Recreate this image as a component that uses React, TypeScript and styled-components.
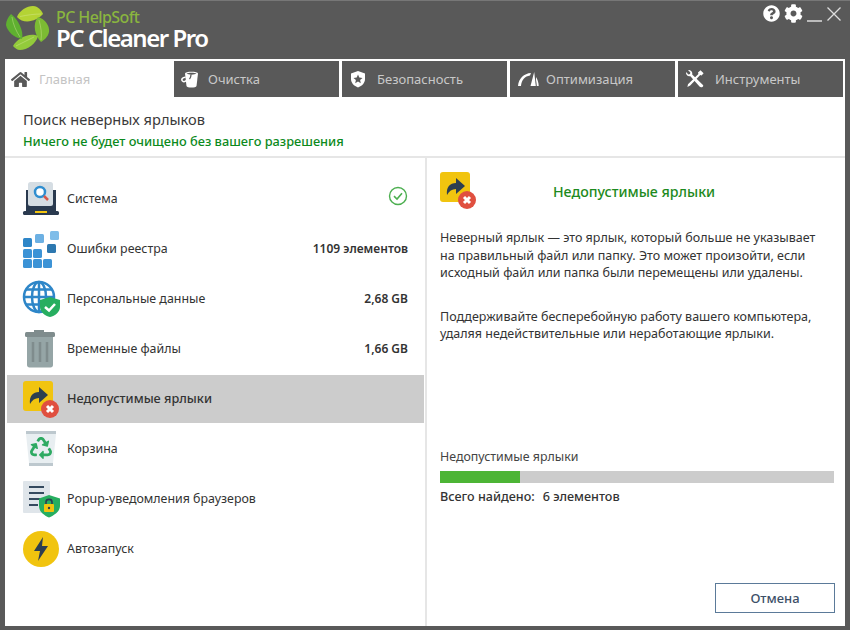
import styled, { createGlobalStyle } from 'styled-components';
import { FaCog, FaHome, FaQuestionCircle, FaRecycle } from 'react-icons/fa';

const GlobalStyle = createGlobalStyle`
  html, body {
    margin: 0;
    padding: 0;
    background: #595959;
  }
  * {
    box-sizing: border-box;
  }
`;

const Window = styled.div`
  width: 850px;
  height: 630px;
  background: #595959;
  border-top: 1px solid #777;
  padding: 0 5px 4px 5px;
  display: flex;
  flex-direction: column;
  font-family: 'Noto Sans', 'Open Sans', sans-serif;
  color: #333;
`;

const TitleBar = styled.div`
  height: 58px;
  flex: none;
  display: flex;
  justify-content: space-between;
  align-items: flex-start;
`;

const Brand = styled.div`
  display: flex;
  align-items: flex-start;
  gap: 1px;
  padding-top: 2px;
`;

const BrandText = styled.div`
  display: flex;
  flex-direction: column;
  padding-top: 6px;
`;

const Vendor = styled.div`
  font-size: 16px;
  line-height: 16px;
  font-weight: 500;
  letter-spacing: -0.6px;
  color: #8ab53f;
`;

const Product = styled.div`
  font-size: 24px;
  line-height: 26px;
  font-weight: 600;
  letter-spacing: -1.45px;
  color: #fff;
`;

const WindowButtons = styled.div`
  display: flex;
  align-items: center;
  gap: 4px;
  color: #fff;
  padding: 3px 0 0 0;
  margin-right: 3px;
`;

const Content = styled.div`
  flex: 1;
  background: #fff;
  display: flex;
  flex-direction: column;
  min-height: 0;
`;

const Tabs = styled.div`
  display: flex;
  flex: none;
  padding-top: 2px;
  gap: 3px;
  height: 38px;
`;

const FirstTab = styled.div`
  width: 169px;
  margin-right: -3px;
  background: #fff;
  color: #c4c4c4;
  display: flex;
  align-items: center;
  gap: 9px;
  padding-left: 6px;
  font-size: 13px;
`;

const Tab = styled.div<{ $gap: number }>`
  width: 165px;
  background: #595959;
  color: #c8c8c8;
  display: flex;
  align-items: center;
  gap: ${(p) => p.$gap}px;
  padding-left: 7px;
  font-size: 13px;
`;

const TabIcon = styled.span`
  height: 20px;
  display: flex;
  align-items: center;
  color: #fff;
`;

const HomeTabIcon = styled(TabIcon)`
  color: #595959;
`;

const Header = styled.div`
  flex: none;
  height: 61px;
  padding: 12px 0 0 18px;
  border-bottom: 2px solid #e6e6e6;
`;

const Heading = styled.div`
  font-size: 14.6px;
  line-height: 20px;
  color: #3a3a3a;
`;

const Notice = styled.div`
  font-size: 12.8px;
  line-height: 18px;
  margin-top: 3px;
  font-weight: 500;
  color: #0c8a1c;
`;

const Body = styled.div`
  flex: 1;
  display: flex;
  min-height: 0;
`;

const Sidebar = styled.div`
  width: 422px;
  flex: none;
  border-right: 2px solid #e6e6e6;
  padding: 17px 0 0 2px;
  display: flex;
  flex-direction: column;
  gap: 2px;
`;

const Row = styled.div<{ $selected?: boolean }>`
  height: 48px;
  width: 417px;
  flex: none;
  display: flex;
  align-items: center;
  padding: 0 16px 0 15px;
  background: ${(p) => (p.$selected ? '#cccccc' : 'transparent')};
  font-size: 12.5px;
`;

const RowIcon = styled.div`
  width: 38px;
  height: 38px;
  margin-right: 7px;
  flex: none;
`;

const RowLabel = styled.div<{ $selected?: boolean }>`
  flex: 1;
  padding-bottom: 2px;
  color: #333;
  font-size: ${(p) => (p.$selected ? '12.7px' : '12.4px')};
  font-weight: ${(p) => (p.$selected ? 500 : 400)};
`;

const RowValue = styled.div`
  padding-bottom: 2px;
  font-weight: 600;
  font-size: 12px;
  color: #333;
`;

const Details = styled.div`
  flex: 1;
  display: flex;
  flex-direction: column;
  padding: 14px 11px 13px 13px;
`;

const DetailsHead = styled.div`
  display: flex;
  height: 39px;
  margin: -1px 0 0 -1px;
  flex: none;
`;

const DetailsTitle = styled.div`
  flex: 1;
  text-align: center;
  padding-right: 43px;
  font-size: 14.2px;
  font-weight: 500;
  line-height: 41px;
  color: #1d8a20;
`;

const Paragraph = styled.p`
  margin: 0;
  font-size: 12.5px;
  line-height: 17.5px;
  color: #333;
  white-space: pre-line;
`;

const FirstParagraph = styled(Paragraph)`
  margin-top: 19px;
`;

const SecondParagraph = styled(Paragraph)`
  margin-top: 26px;
`;

const Spacer = styled.div`
  flex: 1;
`;

const ProgressLabel = styled.div`
  font-size: 12.4px;
  line-height: 18px;
  color: #444;
`;

const Progress = styled.div`
  height: 12px;
  margin-top: 5px;
  background: #cccccc;
`;

const ProgressFill = styled.div`
  height: 100%;
  background: #4db535;
`;

const Found = styled.div`
  display: flex;
  gap: 8px;
  margin-top: 5px;
  font-size: 12.6px;
  line-height: 18px;
  font-weight: 500;
  color: #333;
`;

const Footer = styled.div`
  height: 30px;
  margin-top: 77px;
  margin-right: -1px;
  display: flex;
  justify-content: flex-end;
`;

const CancelButton = styled.button`
  width: 120px;
  height: 30px;
  background: #fff;
  border: 1px solid #5b7a99;
  border-radius: 0;
  font-family: inherit;
  font-size: 13px;
  font-weight: 500;
  color: #3d5068;
  padding: 0;
`;

const Logo = () => (
  <svg width="50" height="50" viewBox="5 3 50 50">
    <path d="M17 17C20 9 31 4 37 7C40 9 42 11 43 14C37 21 24 25 17 17Z" fill="#b4d334" />
    <path d="M38 17C45 19 50 26 49 32C48 37 44 40 41 42C35 36 32 24 38 17Z" fill="#7cbb33" />
    <path d="M38 36C36 44 27 50 20 50C17 50 15 48 13 46C17 38 30 32 38 36Z" fill="#93cb3b" />
    <path d="M22 39C14 38 7 31 6 25C6 21 8 17 11 14C18 19 24 31 22 39Z" fill="#5fb030" />
    <path d="M20 16.5C27 15 35 14 41 14M39 20C41 27 42 34 41 40M34 37C28 40 22 43 16 46M20 37C16 31 13 24 12 17" stroke="#d8ea9c" strokeWidth="0.7" fill="none" opacity="0.6" />
  </svg>
);

const ShieldStar = () => (
  <svg width="18" height="18" viewBox="0 0 18 18">
    <path d="M9 1L16 3.5V9C16 13 13 16 9 17.5C5 16 2 13 2 9V3.5Z" fill="#fff" />
    <path d="M9 4.6L10.3 7.6L13.5 7.9L11.1 10L11.8 13.2L9 11.5L6.2 13.2L6.9 10L4.5 7.9L7.7 7.6Z" fill="#595959" />
  </svg>
);

const CleanIcon = () => (
  <svg width="18" height="18" viewBox="0 0 18 18">
    <path d="M4 3.5C4 1 17 1 17 3.5L15.5 16C15 18 6 18 5.5 16Z" fill="#fff" />
    <path d="M5.5 3.6C7.5 5 13.5 5 15.5 3.6C13.5 2.4 7.5 2.4 5.5 3.6Z" fill="#595959" />
    <path d="M4.6 7.2C1.5 7 0 9.5 1.5 11C2.8 12.2 4.5 11.6 5.2 10.4" stroke="#fff" strokeWidth="1.5" fill="none" />
    <path d="M10 4.5C10 6.5 9.5 8 8.5 9" stroke="#595959" strokeWidth="1.3" fill="none" />
  </svg>
);

const GaugeIcon = () => (
  <svg width="22" height="18" viewBox="0 0 22 18">
    <path d="M1 16C1.6 8.5 7 3.4 14 3L13 5.4C8 6 4.4 10 4 16Z" fill="#fff" />
    <path d="M13.5 16L17.2 2L18.8 16Z" fill="#fff" />
    <path d="M19 7C20.6 9.6 21.6 12.6 21.7 16H19.8C19.7 14 19.4 12 19 10Z" fill="#fff" />
  </svg>
);

const ToolsIcon = () => (
  <svg width="20" height="20" viewBox="0 0 20 20">
    <path d="M3 1L5.4 3.4L5 5L3.4 5.4L1 3C0.6 5.8 3 8 5.4 7.2L14.5 17.6C15.6 19 18.6 18.4 18.2 16.2L7.2 5.6C8 3 5.6 0.6 3 1Z" fill="#fff" />
    <path d="M15.5 1.2L18.6 4.2L16.6 6.4L15.2 6L5.2 16.6L2.4 18L3 15.2L13.4 5L13 3.4Z" fill="#fff" />
  </svg>
);

const CloseIcon = () => (
  <svg width="16" height="16" viewBox="0 0 16 16">
    <path d="M1.5 1.5L14.5 14.5M14.5 1.5L1.5 14.5" stroke="#ddd" strokeWidth="1.3" />
  </svg>
);

const MinimizeIcon = () => (
  <svg width="15" height="16" viewBox="0 0 15 16">
    <path d="M0 15H15" stroke="#ddd" strokeWidth="1.5" />
  </svg>
);

const SystemIcon = () => (
  <svg width="38" height="38" viewBox="0 0 38 38">
    <path d="M4 10H34V32H4Z" fill="#2a3a4f" />
    <rect x="1" y="31" width="36" height="4" rx="1.5" fill="#2a3a4f" />
    <rect x="13" y="31" width="12" height="2" fill="#f1c40f" />
    <rect x="6" y="2" width="25" height="24" rx="2.5" fill="#d5dde3" />
    <circle cx="18" cy="12" r="5" fill="#fff" stroke="#2f8ed0" strokeWidth="2.5" />
    <path d="M22 16L26 20" stroke="#d9584a" strokeWidth="2.5" />
  </svg>
);

const RegistryIcon = () => (
  <svg width="38" height="38" viewBox="0 0 38 38">
    <rect x="1" y="8" width="9" height="9" rx="1.5" fill="#2e86c8" />
    <rect x="13" y="4" width="9" height="9" rx="1.5" fill="#6cb0e3" />
    <rect x="28" y="1" width="9" height="9" rx="1.5" fill="#7fbde9" />
    <rect x="25" y="14" width="9" height="9" rx="1.5" fill="#2d78b0" />
    <rect x="1" y="19" width="9" height="9" rx="1.5" fill="#3c93d6" />
    <rect x="11" y="19" width="9" height="9" rx="1.5" fill="#3c93d6" />
    <rect x="1" y="29" width="9" height="9" rx="1.5" fill="#3c93d6" />
    <rect x="11" y="29" width="9" height="9" rx="1.5" fill="#3c93d6" />
    <rect x="21" y="29" width="9" height="9" rx="1.5" fill="#3c93d6" />
  </svg>
);

const GlobeIcon = () => (
  <svg width="38" height="38" viewBox="0 0 38 38">
    <circle cx="17" cy="17" r="15" fill="#fff" stroke="#2e86c8" strokeWidth="2.5" />
    <ellipse cx="17" cy="17" rx="7" ry="15" fill="none" stroke="#2e86c8" strokeWidth="2.5" />
    <path d="M17 2V32M2 17H32M4 9.5H30M4 24.5H30" stroke="#2e86c8" strokeWidth="2.5" />
    <path d="M28 17L38 20V27C38 32 33 36 28 37C23 36 18 32 18 27V20Z" fill="#27ae60" />
    <path d="M23 27L27 30.5L33 24" stroke="#fff" strokeWidth="2.5" fill="none" />
  </svg>
);

const TrashIcon = () => (
  <svg width="38" height="38" viewBox="0 0 38 38">
    <rect x="12" y="0" width="10" height="3" fill="#7f8c8d" />
    <rect x="3" y="2" width="30" height="5" rx="1.5" fill="#7f8c8d" />
    <path d="M5 7H31V35C31 36.5 30 37.5 28.5 37.5H7.5C6 37.5 5 36.5 5 35Z" fill="#95a5a6" />
    <path d="M11 12V32M18 12V32M25 12V32" stroke="#7f8c8d" strokeWidth="2.5" />
  </svg>
);

const ShortcutIcon = () => (
  <svg width="38" height="38" viewBox="0 0 38 38">
    <rect x="1" y="1" width="30" height="30" rx="3" fill="#f1c40f" />
    <path d="M8 24C7 16 11 12 17 12V7L26 15L17 23V18C13 18 10 20 8 24Z" fill="#2c3e50" />
    <circle cx="28" cy="29" r="9" fill="#e04f3f" />
    <path d="M25 26L31 32M31 26L25 32" stroke="#fff" strokeWidth="3" />
  </svg>
);

const RecycleIcon = () => (
  <svg width="38" height="38" viewBox="0 0 38 38">
    <rect x="4" y="1" width="30" height="3" fill="#bdc8ce" />
    <path d="M4 4H34L31 33H7Z" fill="#e8eef1" />
    <rect x="7" y="33" width="24" height="3" fill="#bdc8ce" />
    <FaRecycle x="8" y="7" size={22} color="#2eaa62" />
  </svg>
);

const PopupIcon = () => (
  <svg width="38" height="38" viewBox="0 0 38 38">
    <rect x="1" y="1" width="27" height="32" rx="1" fill="#dfe5ea" />
    <path d="M7 7H22M7 13H22M7 19H18M7 25H16" stroke="#34495e" strokeWidth="2" />
    <path d="M27 15L38 18.5V26C38 31 33 35 27 37.5C21 35 17 31 17 26V18.5Z" fill="#27ae60" />
    <rect x="22" y="24" width="10" height="8" rx="1" fill="#f1c40f" />
    <path d="M24 24V22C24 18.5 30 18.5 30 22V24" stroke="#2c3e50" strokeWidth="1.6" fill="none" />
    <circle cx="27" cy="28" r="1.2" fill="#2c3e50" />
  </svg>
);

const AutorunIcon = () => (
  <svg width="38" height="38" viewBox="0 0 38 38">
    <circle cx="19" cy="19" r="18" fill="#f1c40f" />
    <path d="M21 7L12 21H18L16 31L26 16H20Z" fill="#2c3e50" />
  </svg>
);

const CheckIcon = () => (
  <svg width="20" height="20" viewBox="0 0 20 20">
    <circle cx="10" cy="10" r="8.5" fill="none" stroke="#4caf50" strokeWidth="1.4" />
    <path d="M6 10.2L9 13L14 7.2" fill="none" stroke="#4caf50" strokeWidth="1.6" />
  </svg>
);

const tabs = [
  { label: 'Очистка', icon: <CleanIcon />, gap: 9 },
  { label: 'Безопасность', icon: <ShieldStar />, gap: 10 },
  { label: 'Оптимизация', icon: <GaugeIcon />, gap: 7 },
  { label: 'Инструменты', icon: <ToolsIcon />, gap: 10 },
];

const rows = [
  { label: 'Система', icon: <SystemIcon />, value: <CheckIcon /> },
  { label: 'Ошибки реестра', icon: <RegistryIcon />, value: '1109 элементов' },
  { label: 'Персональные данные', icon: <GlobeIcon />, value: '2,68 GB' },
  { label: 'Временные файлы', icon: <TrashIcon />, value: '1,66 GB' },
  { label: 'Недопустимые ярлыки', icon: <ShortcutIcon />, selected: true },
  { label: 'Корзина', icon: <RecycleIcon /> },
  { label: 'Popup-уведомления браузеров', icon: <PopupIcon /> },
  { label: 'Автозапуск', icon: <AutorunIcon /> },
];

const App = () => {
  return (
    <>
      <GlobalStyle />
      <Window>
        <TitleBar>
          <Brand>
            <Logo />
            <BrandText>
              <Vendor>PC HelpSoft</Vendor>
              <Product>PC Cleaner Pro</Product>
            </BrandText>
          </Brand>
          <WindowButtons>
            <FaQuestionCircle size={17} />
            <FaCog size={19} />
            <MinimizeIcon />
            <CloseIcon />
          </WindowButtons>
        </TitleBar>
        <Content>
          <Tabs>
            <FirstTab>
              <HomeTabIcon>
                <FaHome size={19} />
              </HomeTabIcon>
              Главная
            </FirstTab>
            {tabs.map((tab) => (
              <Tab key={tab.label} $gap={tab.gap}>
                <TabIcon>{tab.icon}</TabIcon>
                {tab.label}
              </Tab>
            ))}
          </Tabs>
          <Header>
            <Heading>Поиск неверных ярлыков</Heading>
            <Notice>Ничего не будет очищено без вашего разрешения</Notice>
          </Header>
          <Body>
            <Sidebar>
              {rows.map((row) => (
                <Row key={row.label} $selected={row.selected}>
                  <RowIcon>{row.icon}</RowIcon>
                  <RowLabel $selected={row.selected}>{row.label}</RowLabel>
                  {row.value && <RowValue>{row.value}</RowValue>}
                </Row>
              ))}
            </Sidebar>
            <Details>
              <DetailsHead>
                <ShortcutIcon />
                <DetailsTitle>Недопустимые ярлыки</DetailsTitle>
              </DetailsHead>
              <FirstParagraph>
                {'Неверный ярлык — это ярлык, который больше не указывает\nна правильный файл или папку. Это может произойти, если\nисходный файл или папка были перемещены или удалены.'}
              </FirstParagraph>
              <SecondParagraph>
                {'Поддерживайте бесперебойную работу вашего компьютера,\nудаляя недействительные или неработающие ярлыки.'}
              </SecondParagraph>
              <Spacer />
              <ProgressLabel>Недопустимые ярлыки</ProgressLabel>
              <Progress>
                <ProgressFill style={{ width: '20.3%' }} />
              </Progress>
              <Found>
                <span>Всего найдено:</span>
                <span>6 элементов</span>
              </Found>
              <Footer>
                <CancelButton>Отмена</CancelButton>
              </Footer>
            </Details>
          </Body>
        </Content>
      </Window>
    </>
  );
};

export default App;
